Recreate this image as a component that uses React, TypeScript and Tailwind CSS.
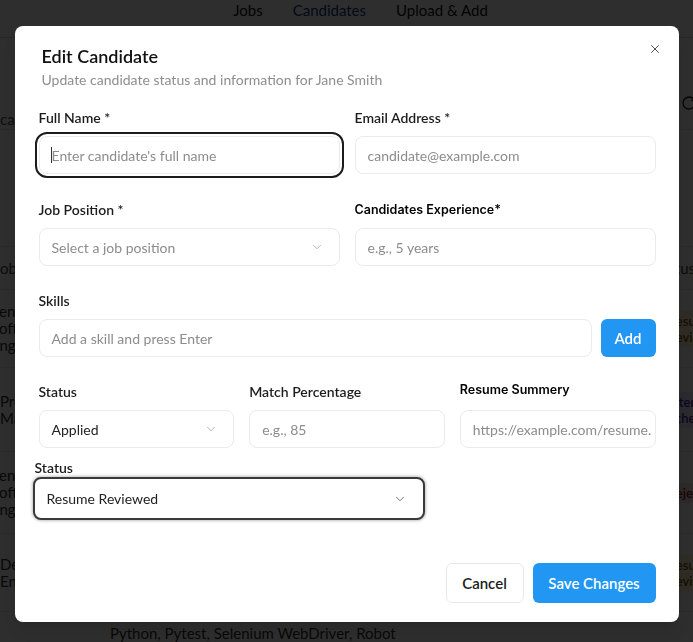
import { ChevronDown, X, RotateCw } from "lucide-react"

const rows = [
  { job: ["Senior", "Software", "Engineering"], shift: "-ml-[9px]", status: ["Resume", "Reviewed"], tone: "bg-[#fef3c7] text-[#7c5a12]", h: "h-[78px]" },
  { job: ["Product", "Manager"], shift: "ml-0", status: ["Interview", "Scheduled"], tone: "bg-[#ede9fe] text-[#4c2a9e]", h: "h-[84px]" },
  { job: ["Senior", "Software", "Engineering"], shift: "-ml-[9px]", status: ["Rejected"], tone: "bg-[#fee2e2] text-[#8f1d1d]", h: "h-[82px]" },
  { job: ["DevOps", "Engineering"], shift: "ml-0", status: ["Resume", "Reviewed"], tone: "bg-[#fef3c7] text-[#7c5a12]", h: "h-[78px]" },
]

const Label = ({ children, alt = false }: { children: React.ReactNode; alt?: boolean }) =>
  alt ? (
    <label className="block h-5 text-[12.5px] leading-5 font-semibold text-black font-['Inter',sans-serif]">{children}</label>
  ) : (
    <label className="block h-5 text-[14px] leading-5 font-semibold text-[#1c1c1c]">{children}</label>
  )

const Field = ({ placeholder }: { placeholder: string }) => (
  <div className="h-[38px] rounded-lg border border-[#ebebeb] bg-white px-3 flex items-center text-[14px] text-[#8c8c8c]">
    {placeholder}
  </div>
)

const SelectBox = ({ value, muted = false }: { value: string; muted?: boolean }) => (
  <div className="h-[38px] rounded-lg border border-[#ebebeb] bg-white pl-3 pr-[15px] flex items-center justify-between text-[14px]">
    <span className={muted ? "text-[#8c8c8c]" : "text-[#222]"}>{value}</span>
    <ChevronDown size={14} strokeWidth={1.3} className="text-[#9a9a9a]" />
  </div>
)

export default function App() {
  return (
    <div className="relative min-h-screen bg-white font-['Lato',sans-serif] overflow-hidden">
      {/* page behind the dialog */}
      <header className="h-[38px] border-b border-gray-300 flex justify-center gap-[30px] pl-[28px] text-[15px] leading-5 text-[#111]">
        <span>Jobs</span>
        <span className="text-[#0b3a8c]">Candidates</span>
        <span>Upload &amp; Add</span>
      </header>
      <div className="flex items-start justify-between h-[92px] border-b border-gray-200 pt-[70px]">
        <span className="text-[15px] text-[#555]">candidates</span>
        <RotateCw size={16} className="-mr-[4px] -mt-[13px] text-[#222]" />
      </div>
      <div className="h-[116px]" />
      <div className="flex items-center justify-between h-[44px] border-y border-gray-200 text-[15px] text-[#444]">
        <span className="-ml-[6px]">Job</span>
        <span className="-mr-[2px]">Status</span>
      </div>
      {rows.map((r, i) => (
        <div key={i} className={`flex items-center justify-between border-b border-gray-200 ${r.h}`}>
          <div className={`${r.shift} text-[15px] leading-[17px] text-[#333]`}>
            {r.job.map((l) => (
              <div key={l}>{l}</div>
            ))}
          </div>
          <span className={`-mr-[46px] w-[75px] rounded-md px-1 py-[2px] text-[13px] leading-[16px] font-semibold ${r.tone}`}>
            {r.status.map((s) => (
              <div key={s}>{s}</div>
            ))}
          </span>
        </div>
      ))}
      <div className="pl-[110px] pt-[10px] text-[15px] text-[#333]">Python, Pytest, Selenium WebDriver, Robot</div>

      {/* overlay */}
      <div className="fixed inset-0 bg-black/[0.82]" />

      {/* dialog */}
      <div className="fixed inset-0 flex justify-center pt-[26px]">
        <div className="relative w-[664px] h-[596px] rounded-lg bg-white pl-6 pr-[23px] pt-4 shadow-lg">
          <button className="absolute right-[17px] top-[16px] text-[#444]">
            <X size={14} strokeWidth={1.6} />
          </button>
          <h2 className="text-[18px] leading-7 font-semibold text-[#111] pl-[3px]">Edit Candidate</h2>
          <p className="text-[14px] leading-5 text-[#8e8e8e] pl-[3px]">Update candidate status and information for Jane Smith</p>

          <div className="mt-[18px] grid grid-cols-2 gap-x-[15px]">
            <div>
              <Label>Full Name *</Label>
              <div className="mt-2 h-[38px] rounded-lg border border-[#ebebeb] bg-white pl-[11px] flex items-center text-[14px] text-[#8c8c8c] outline-2 outline-[#1c1c1c] outline-offset-[2px]">
                <span className="w-px h-[16px] bg-[#333]" />
                Enter candidate's full name
              </div>
            </div>
            <div>
              <Label>Email Address *</Label>
              <div className="mt-2">
                <Field placeholder="candidate@example.com" />
              </div>
            </div>
          </div>

          <div className="mt-[26px] grid grid-cols-2 gap-x-[15px]">
            <div>
              <Label>Job Position *</Label>
              <div className="mt-2">
                <SelectBox value="Select a job position" muted />
              </div>
            </div>
            <div>
              <Label alt>Candidates Experience*</Label>
              <div className="mt-2">
                <Field placeholder="e.g., 5 years" />
              </div>
            </div>
          </div>

          <div className="mt-[25px]">
            <Label>Skills</Label>
            <div className="mt-2 flex gap-[9px]">
              <div className="flex-1">
                <Field placeholder="Add a skill and press Enter" />
              </div>
              <button className="w-[55px] h-[38px] rounded-md bg-[#2196f3] text-white text-[15px] font-semibold">Add</button>
            </div>
          </div>

          <div className="mt-[25px] grid grid-cols-3 gap-x-[15px]">
            <div>
              <Label>Status</Label>
              <div className="mt-2">
                <SelectBox value="Applied" />
              </div>
            </div>
            <div>
              <Label>Match Percentage</Label>
              <div className="mt-2">
                <Field placeholder="e.g., 85" />
              </div>
            </div>
            <div>
              <div className="-mt-[2px]">
                <Label alt>Resume Summery</Label>
              </div>
              <div className="mt-[10px]">
                <Field placeholder="https://example.com/resume." />
              </div>
            </div>
          </div>

          <div className="mt-[12px] -ml-[6px]">
            <label className="block pl-[2px] text-[14px] leading-4 font-semibold text-[#1c1c1c]">Status</label>
            <div className="mt-px w-[392px] h-[43px] rounded-lg border-2 border-[#3a3a3a] bg-white pl-[12px] pr-[16px] flex items-center justify-between text-[14px] text-[#222] shadow-[0_0_3px_1px_rgba(0,0,0,0.25)]">
              <span>Resume Reviewed</span>
              <ChevronDown size={14} strokeWidth={1.4} className="text-[#555]" />
            </div>
          </div>

          <div className="mt-[43px] flex justify-end gap-[9px]">
            <button className="w-[78px] h-[40px] rounded-md border border-[#e8e8e8] bg-white text-[15px] font-semibold text-[#1c1c1c]">Cancel</button>
            <button className="w-[123px] h-[40px] rounded-md bg-[#2196f3] text-white text-[15px] font-semibold">Save Changes</button>
          </div>
        </div>
      </div>
    </div>
  )
}
